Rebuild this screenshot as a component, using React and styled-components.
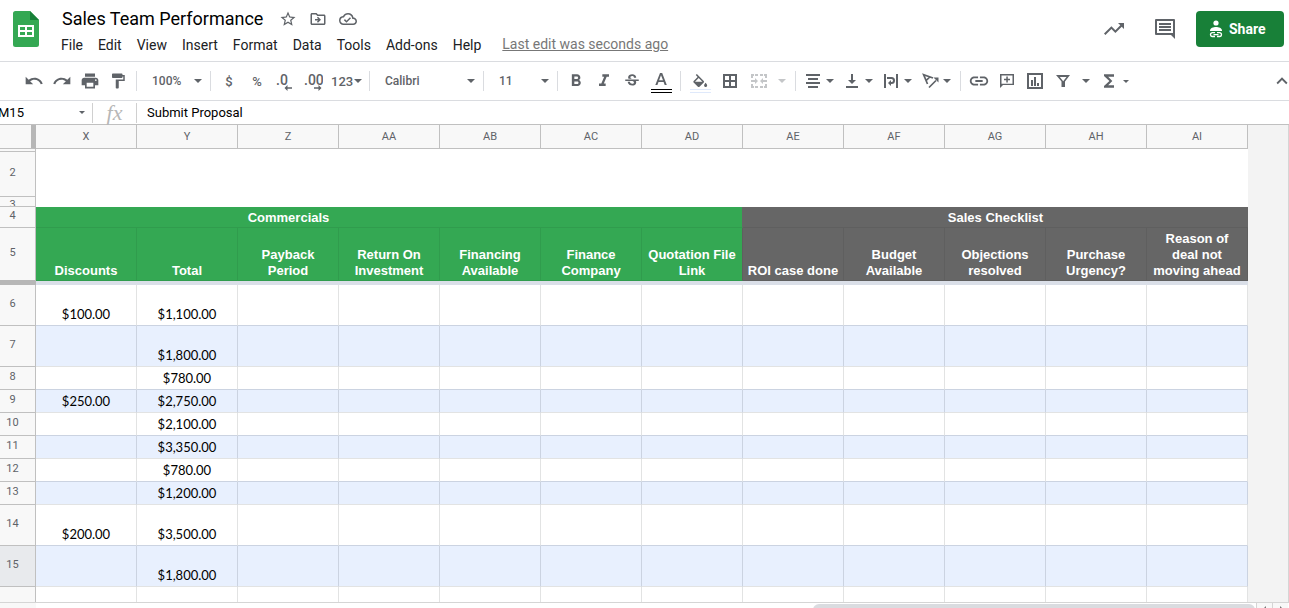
import styled, { createGlobalStyle } from 'styled-components'
import {
  MdUndo,
  MdRedo,
  MdPrint,
  MdFormatPaint,
  MdFormatBold,
  MdFormatItalic,
  MdStrikethroughS,
  MdLink,
  MdFunctions,
  MdStarBorder,
  MdOutlineDriveFileMove,
  MdOutlineCloudDone,
  MdTrendingUp,
  MdKeyboardArrowUp,
} from 'react-icons/md'

const GlobalStyle = createGlobalStyle`
* {
  box-sizing: border-box;
}
body {
  margin: 0;
  background: white;
  font-family: Roboto, "Liberation Sans", sans-serif;
}
button, input, select {
  font-family: inherit;
  margin: 0;
  padding: 0;
  border: none;
  outline: none;
  background: transparent;
}
svg {
  display: block;
  flex: none;
}
`

const Page = styled.div`
display: flex;
flex-direction: column;
height: 100vh;
overflow: hidden;
`

/* header */

const Header = styled.header`
display: flex;
align-items: flex-start;
height: 62px;
padding: 0 5px 0 13px;
border-bottom: 1px solid #dadce0;
`

const LogoLink = styled.a`
margin-top: 11px;
`

const TitleBlock = styled.div`
flex: 1;
margin-left: 15px;
`

const TitleRow = styled.div`
display: flex;
align-items: center;
height: 26px;
margin-top: 6px;
padding-left: 8px;
`

const Title = styled.h1`
margin: 0 10px 0 0;
font-size: 18px;
font-weight: 400;
line-height: 26px;
color: #000;
`

const TitleButton = styled.button`
display: flex;
justify-content: center;
width: 30px;
color: #5f6368;
`

const MenuRow = styled.nav`
display: flex;
align-items: center;
gap: 1px;
height: 26px;
`

const MenuButton = styled.button`
padding: 0 7px;
font-size: 14px;
line-height: 24px;
color: #202124;
`

const LastEdit = styled.a`
margin-left: 13px;
padding-bottom: 2px;
font-size: 14px;
line-height: 16px;
color: #777;
text-decoration: underline;
`

const HeaderActions = styled.div`
display: flex;
align-items: center;
height: 36px;
margin-top: 11px;
`

const HeaderButton = styled.button`
display: flex;
align-items: center;
justify-content: center;
width: 51px;
height: 36px;
color: #5f6368;
`

const ShareButton = styled.button`
display: flex;
align-items: center;
gap: 6px;
width: 88px;
height: 36px;
margin-left: 6px;
padding-left: 13px;
border-radius: 4px;
background: #188038;
color: white;
font-size: 14px;
font-weight: 700;
`

/* toolbar */

const Toolbar = styled.div`
display: flex;
align-items: center;
height: 39px;
padding-left: 20px;
border-bottom: 1px solid #dadce0;
color: #5f6368;
`

const Separator = styled.div`
width: 1px;
height: 20px;
margin: 0 4px;
background: #dadce0;
`

const ToolButton = styled.button`
display: flex;
align-items: center;
justify-content: ${props => props.$menu ? "flex-start" : "center"};
gap: ${props => props.$gap || 4}px;
width: ${props => props.$width || 28}px;
height: 28px;
padding-left: ${props => props.$menu ? "4px" : "0"};
color: ${props => props.$off ? "#c4c6c8" : "#5f6368"};
font-size: 13px;
font-weight: 500;
`

const PushRight = styled.div`
display: flex;
margin-left: auto;
width: 18px;
overflow: hidden;
`

const SelectBox = styled.div`
display: grid;
align-items: center;
width: ${props => props.$width}px;
height: 28px;
> * {
  grid-area: 1 / 1;
}
> svg {
  justify-self: end;
  margin-right: 4px;
  pointer-events: none;
}
`

const Select = styled.select`
appearance: none;
width: 100%;
height: 26px;
padding-left: 11px;
font-size: 12px;
font-weight: 500;
color: #5f6368;
`

/* formula bar */

const FormulaBar = styled.div`
display: flex;
align-items: center;
height: 24px;
border-bottom: 1px solid #c0c0c0;
`

const NameBox = styled.div`
display: flex;
align-items: center;
width: 92px;
overflow: hidden;
color: #5f6368;
`

const NameInput = styled.input`
width: 81px;
margin-left: -2px;
font-size: 13px;
color: #000;
`

const BarLine = styled.div`
width: 1px;
height: 20px;
background: #d0d0d0;
`

const Fx = styled.label`
width: 43px;
text-align: center;
font-family: "Liberation Serif", serif;
font-style: italic;
font-size: 22px;
line-height: 20px;
color: #b7b7b7;
`

const FormulaInput = styled.input`
flex: 1;
padding-left: 10px;
font-size: 13px;
color: #000;
`

/* sheet */

const SheetArea = styled.main`
flex: 1;
min-height: 0;
overflow: hidden;
margin-right: 1px;
background: #f3f3f3;
box-shadow: 1px 0 #d5d5d5;
`

const Sheet = styled.table`
table-layout: fixed;
width: 1248px;
border-collapse: separate;
border-spacing: 0;
background: white;
`

const Corner = styled.td`
padding: 0;
background: #f8f8f8;
border-right: 5px solid #b7b7b7;
border-bottom: 1px solid #c0c0c0;
`

const ColumnHead = styled.th`
height: 24px;
padding: 0;
border-right: 1px solid #c0c0c0;
border-bottom: 1px solid #c0c0c0;
background: #f8f8f8;
font-size: 11px;
font-weight: 400;
color: #5f6368;
`

const RowHead = styled.th`
padding: 0;
border-right: 1px solid #c0c0c0;
border-bottom: 1px solid ${props => props.$last ? "#b7b7b7" : "#c0c0c0"};
background: ${props => props.$active ? "#e8eaed" : "#f8f8f8"};
font-size: 11px;
font-weight: 400;
line-height: 16px;
color: #5f6368;
`

const RowNumber = styled.div`
display: flex;
align-items: safe center;
justify-content: center;
height: ${props => props.$height - 1}px;
padding: 0 10px 2px 0;
overflow: hidden;
`

const Blank = styled.td`
padding: 0;
`

const gridLine = gray => gray ? "#5f5f5f" : "#309c4d"

const GroupHead = styled.th`
padding: 1px 0 0;
border-right: ${props => props.$edge ? "1px solid #666666" : "none"};
border-bottom: 1px solid ${props => gridLine(props.$gray)};
background: ${props => props.$gray ? "#666666" : "#34a853"};
font-family: "Liberation Sans", sans-serif;
font-size: 13px;
line-height: 16px;
color: white;
`

const FieldHead = styled.th`
padding: 0 0 1px;
border-right: 1px solid ${props => gridLine(props.$gray || props.$edge)};
border-bottom: 1px solid ${props => gridLine(props.$gray)};
background: ${props => props.$gray ? "#666666" : "#34a853"};
font-family: "Liberation Sans", sans-serif;
font-size: 13px;
line-height: 16px;
vertical-align: bottom;
color: white;
`

const Freeze = styled.td`
height: 4px;
padding: 0;
background: ${props => props.$head ? "#b7b7b7" : "#dadfe8"};
`

const Cell = styled.td`
padding: 0 0 3px;
border-right: 1px solid ${props => props.$banded ? "#cbd3e1" : "#e2e3e3"};
border-bottom: 1px solid ${props => props.$beforeBand ? "#cbd3e1" : "#e2e3e3"};
background: ${props => props.$banded ? "#e8f0fe" : "white"};
font-family: Lato, sans-serif;
font-size: 13px;
line-height: 16px;
text-align: center;
vertical-align: bottom;
color: #000;
`

const ScrollBar = styled.div`
display: flex;
justify-content: flex-end;
height: 6px;
padding-right: 1px;
overflow: hidden;
border-top: 1px solid #d5d5d5;
background: linear-gradient(to right, #f8f8f8 36px, white 36px);
`

const Thumb = styled.div`
width: 442px;
height: 12px;
margin: 1px 1px 0 0;
border-radius: 6px;
background: #dadce0;
`

const ScrollButton = styled.button`
display: flex;
justify-content: center;
width: 16px;
height: 16px;
padding-top: 3px;
border-left: 1px solid #d5d5d5;
background: #f8f8f8;
color: #777;
`

/* drawings */

const Icon = ({ d, size = 18 }) => (
  <svg width={size} height={size} viewBox={`0 0 ${size} ${size}`} fill="currentColor" fillRule="evenodd">
    <path d={d} />
  </svg>
)

const Caret = ({ small }) => (
  <svg width={small ? 6 : 8} height={small ? 3 : 4} viewBox="0 0 8 4" fill="currentColor">
    <path d="M0 0h8L4 4z" />
  </svg>
)

const Logo = () => (
  <svg width="26" height="36" viewBox="0 0 26 36">
    <path fill="#34a853" d="M2.5 0H17l9 9v24.500a2.500 2.500 0 0 1-2.500 2.500h-21A2.500 2.500 0 0 1 0 33.500v-31A2.500 2.500 0 0 1 2.500 0z" />
    <path fill="#188038" d="M17 0l9 9h-9z" />
    <path fill="white" fillRule="evenodd" d="M5 14h16v12H5zM7 16v3h5v-3zM14 16v3h5v-3zM7 21v3h5v-3zM14 21v3h5v-3z" />
  </svg>
)

const ShareIcon = () => (
  <svg width="14" height="18" viewBox="0 0 14 18" fill="white">
    <circle cx="7" cy="3" r="2.600" />
    <path d="M1 11V10.500C1 8 4.500 7 7 7s6 1 6 3.500v.5z" />
    <path fill="none" stroke="white" strokeWidth="1.300" d="M6 12.700H3.400a1.900 1.900 0 0 0 0 3.800H6M8 12.700h2.600a1.900 1.900 0 0 1 0 3.800H8M4.500 14.600h5" />
  </svg>
)

const TextColorIcon = () => (
  <svg width="22" height="24" viewBox="0 0 22 24">
    <path fill="#5f6368" d="M10 4h2.200l4.600 12h-2.100l-1.100-3H8.500l-1.100 3H5.300zM11 6.300l-1.900 5h3.900z" />
    <path fill="#000" d="M1 20h21v1H1zM1 23h21v1H1z" />
  </svg>
)

const FillColorIcon = () => (
  <svg width="22" height="24" viewBox="0 0 22 24">
    <path
      fill="#5f6368"
      transform="translate(2 5) scale(.77)"
      d="M16.560 8.940L7.620 0 6.210 1.410l2.380 2.380-5.150 5.150c-.59.59-.59 1.540 0 2.120l5.500 5.500c.29.29.68.44 1.060.44s.77-.15 1.060-.44l5.500-5.500c.59-.58.59-1.530 0-2.120zM5.210 10L10 5.210 14.790 10H5.210zM19 11.500s-2 2.170-2 3.500c0 1.100.9 2 2 2s2-.9 2-2c0-1.330-2-3.500-2-3.500z"
    />
    <path fill="#dfe9fb" d="M1 20h21v1H1zM1 23h21v1H1z" />
  </svg>
)

const RotateIcon = () => (
  <svg width="18" height="18" viewBox="0 0 18 18" fill="none" stroke="currentColor" strokeWidth="1.700">
    <path d="M12 6L2.600 2.600 6.500 12M5 8.700L8.800 5M8 15.500l7-7" />
    <path fill="currentColor" stroke="none" d="M17.500 5.500v5l-5-5z" />
  </svg>
)

const DecimalIcon = ({ digits, more }) => (
  <svg width="20" height="22" viewBox="0 0 20 22" fill="#5f6368">
    <text x="1" y="15" fontSize="14" fontWeight="500" fontFamily="Roboto, sans-serif">{digits}</text>
    {more
      ? <path d="M11 17.300h4.500V15l3 3-3 3v-2.300H11z" />
      : <path d="M17 17.300h-4.500V15l-3 3 3 3v-2.300H17z" />}
  </svg>
)

const BORDERS = "M2 2h14v14H2zM4 4v4h4V4zM10 4v4h4V4zM4 10v4h4v-4zM10 10v4h4v-4z"
const MERGE = "M1 2h3v2H3v2H1zM5 2h3v2H5zM10 2h3v2h-3zM14 2h3v4h-2V4h-1zM1 12h2v2h1v2H1zM5 14h3v2H5zM10 14h3v2h-3zM15 12h2v4h-3v-2h1zM1 8h4V6l3 3-3 3v-2H1zM17 8h-4V6l-3 3 3 3v-2h4z"
const ALIGN = "M2 2h14v2H2zM4 6h10v2H4zM2 10h14v2H2zM4 14h10v2H4z"
const VALIGN = "M3 14h12v2H3zM8 2h2v6h3l-4 4-4-4h3z"
const WRAP = "M2 2h2v14H2zM14 2h2v14h-2zM5 5h4.500a3.500 3.500 0 0 1 0 7H9v2l-3-3 3-3v2h.5a1.500 1.500 0 0 0 0-3H5z"
const COMMENT_ADD = "M2 2h14v11H5l-3 3zM3.500 3.500v8.200h11V3.500zM8.300 4.500h1.500v2.300H12v1.500H9.800v2.300H8.300V8.300H6V6.800h2.300z"
const CHART = "M1 1h16v16H1zM3 3v12h12V3zM5 8h2v6H5zM8 5h2v9H8zM11 11h2v3h-2z"
const FILTER = "M2 3h14l-5 6.500V15H7.500V9.500zM5.800 5l3.400 4.300L12.500 5z"
const COMMENTS = "M2 1h18a1 1 0 0 1 1 1v19l-4-4H2a1 1 0 0 1-1-1V2a1 1 0 0 1 1-1zM3 3v12h16V3zM5 5h12v2H5zM5 8h12v2H5zM5 11h12v2H5z"

/* data */

const menus = ["File", "Edit", "View", "Insert", "Format", "Data", "Tools", "Add-ons", "Help"]

const columns = ["X", "Y", "Z", "AA", "AB", "AC", "AD", "AE", "AF", "AG", "AH", "AI"]

const fields = [
  ["Discounts"],
  ["Total"],
  ["Payback", "Period"],
  ["Return On", "Investment"],
  ["Financing", "Available"],
  ["Finance", "Company"],
  ["Quotation File", "Link"],
  ["ROI case done"],
  ["Budget", "Available"],
  ["Objections", "resolved"],
  ["Purchase", "Urgency?"],
  ["Reason of", "deal not", "moving ahead"],
]

const rows = [
  { number: 6, height: 41, discount: "$100.00", total: "$1,100.00" },
  { number: 7, height: 41, total: "$1,800.00" },
  { number: 8, height: 23, total: "$780.00" },
  { number: 9, height: 23, discount: "$250.00", total: "$2,750.00" },
  { number: 10, height: 23, total: "$2,100.00" },
  { number: 11, height: 23, total: "$3,350.00" },
  { number: 12, height: 23, total: "$780.00" },
  { number: 13, height: 23, total: "$1,200.00" },
  { number: 14, height: 41, discount: "$200.00", total: "$3,500.00" },
  { number: 15, height: 41, total: "$1,800.00" },
  { number: 16, height: 59 },
]

const RowHeader = ({ height, number, active, last }) => (
  <RowHead scope="row" $active={active} $last={last}>
    <RowNumber $height={height}>{number}</RowNumber>
  </RowHead>
)

const Dropdown = ({ label, value, width }) => (
  <SelectBox $width={width}>
    <Select aria-label={label} defaultValue={value}>
      <option>{value}</option>
    </Select>
    <Caret />
  </SelectBox>
)

const App = () => {
  return (
    <Page>
      <GlobalStyle />
      <Header>
        <LogoLink href="#home" aria-label="Sheets home"><Logo /></LogoLink>
        <TitleBlock>
          <TitleRow>
            <Title>Sales Team Performance</Title>
            <TitleButton aria-label="Star"><MdStarBorder size={18} /></TitleButton>
            <TitleButton aria-label="Move"><MdOutlineDriveFileMove size={18} /></TitleButton>
            <TitleButton aria-label="Document status"><MdOutlineCloudDone size={18} /></TitleButton>
          </TitleRow>
          <MenuRow>
            {menus.map(menu => <MenuButton key={menu}>{menu}</MenuButton>)}
            <LastEdit href="#history">Last edit was seconds ago</LastEdit>
          </MenuRow>
        </TitleBlock>
        <HeaderActions>
          <HeaderButton aria-label="Activity"><MdTrendingUp size={24} /></HeaderButton>
          <HeaderButton aria-label="Comments"><Icon size={22} d={COMMENTS} /></HeaderButton>
          <ShareButton><ShareIcon />Share</ShareButton>
        </HeaderActions>
      </Header>

      <Toolbar>
        <ToolButton aria-label="Undo"><MdUndo size={20} /></ToolButton>
        <ToolButton aria-label="Redo"><MdRedo size={20} /></ToolButton>
        <ToolButton aria-label="Print"><MdPrint size={20} /></ToolButton>
        <ToolButton aria-label="Paint format"><MdFormatPaint size={18} /></ToolButton>
        <Separator />
        <Dropdown label="Zoom" value="100%" width={65} />
        <Separator />
        <ToolButton>$</ToolButton>
        <ToolButton>%</ToolButton>
        <ToolButton aria-label="Decrease decimal places"><DecimalIcon digits=".0" /></ToolButton>
        <ToolButton aria-label="Increase decimal places"><DecimalIcon digits=".00" more /></ToolButton>
        <ToolButton $width={38} $gap={1} $menu>123<Caret /></ToolButton>
        <Separator />
        <Dropdown label="Font" value="Calibri" width={105} />
        <Separator />
        <Dropdown label="Font size" value="11" width={65} />
        <Separator />
        <ToolButton aria-label="Bold"><MdFormatBold size={20} /></ToolButton>
        <ToolButton aria-label="Italic"><MdFormatItalic size={20} /></ToolButton>
        <ToolButton aria-label="Strikethrough"><MdStrikethroughS size={18} /></ToolButton>
        <ToolButton aria-label="Text color" $width={30}><TextColorIcon /></ToolButton>
        <Separator />
        <ToolButton aria-label="Fill color" $width={30}><FillColorIcon /></ToolButton>
        <ToolButton aria-label="Borders" $width={30}><Icon d={BORDERS} /></ToolButton>
        <ToolButton aria-label="Merge cells" $width={46} $gap={10} $off><Icon d={MERGE} /><Caret /></ToolButton>
        <Separator />
        <ToolButton aria-label="Horizontal align" $width={39} $menu><Icon d={ALIGN} /><Caret /></ToolButton>
        <ToolButton aria-label="Vertical align" $width={39} $menu><Icon d={VALIGN} /><Caret /></ToolButton>
        <ToolButton aria-label="Text wrapping" $width={39} $menu><Icon d={WRAP} /><Caret /></ToolButton>
        <ToolButton aria-label="Text rotation" $width={39} $menu><RotateIcon /><Caret /></ToolButton>
        <Separator />
        <ToolButton aria-label="Insert link"><MdLink size={22} /></ToolButton>
        <ToolButton aria-label="Insert comment"><Icon d={COMMENT_ADD} /></ToolButton>
        <ToolButton aria-label="Insert chart"><Icon d={CHART} /></ToolButton>
        <ToolButton aria-label="Filter" $width={46} $gap={10}><Icon d={FILTER} /><Caret /></ToolButton>
        <ToolButton aria-label="Functions" $width={38} $menu><MdFunctions size={20} /><Caret small /></ToolButton>
        <PushRight>
          <ToolButton aria-label="Hide menus"><MdKeyboardArrowUp size={22} /></ToolButton>
        </PushRight>
      </Toolbar>

      <FormulaBar>
        <NameBox>
          <NameInput aria-label="Name box" defaultValue="M15" />
          <Caret small />
        </NameBox>
        <BarLine />
        <Fx htmlFor="formula">fx</Fx>
        <BarLine />
        <FormulaInput id="formula" defaultValue="Submit Proposal" />
      </FormulaBar>

      <SheetArea>
        <Sheet>
          <colgroup>
            <col style={{ width: 36 }} />
            {columns.map(column => <col key={column} />)}
          </colgroup>
          <thead>
            <tr>
              <Corner />
              {columns.map(column => <ColumnHead key={column} scope="col">{column}</ColumnHead>)}
            </tr>
          </thead>
          <tbody>
            <tr>
              <RowHeader height={3} />
              <Blank colSpan={12} />
            </tr>
            <tr>
              <RowHeader height={45} number={2} />
              <Blank colSpan={12} />
            </tr>
            <tr>
              <RowHeader height={10} number={3} />
              <Blank colSpan={12} />
            </tr>
            <tr>
              <RowHeader height={21} number={4} />
              {/* the merged title starts left of the visible columns */}
              <GroupHead colSpan={5}>Commercials</GroupHead>
              <GroupHead colSpan={2} $edge />
              <GroupHead colSpan={5} $gray>Sales Checklist</GroupHead>
            </tr>
            <tr>
              <RowHeader height={53} number={5} last />
              {fields.map((lines, i) => (
                <FieldHead key={columns[i]} $gray={i > 6} $edge={i === 6}>
                  {lines.map(line => <div key={line}>{line}</div>)}
                </FieldHead>
              ))}
            </tr>
            <tr>
              <Freeze $head />
              <Freeze colSpan={12} />
            </tr>
            {rows.map(row => {
              const banded = row.number % 2 === 1
              return (
                <tr key={row.number}>
                  <RowHeader height={row.height} number={row.number} active={row.number === 15} />
                  {columns.map((column, i) => (
                    <Cell key={column} $banded={banded} $beforeBand={!banded}>
                      {i === 0 && row.discount}
                      {i === 1 && row.total}
                    </Cell>
                  ))}
                </tr>
              )
            })}
          </tbody>
        </Sheet>
      </SheetArea>

      <ScrollBar>
        <Thumb />
        <ScrollButton aria-label="Scroll left"><Icon size={6} d="M4 0v6L1 3z" /></ScrollButton>
        <ScrollButton aria-label="Scroll right"><Icon size={6} d="M2 0v6l3-3z" /></ScrollButton>
      </ScrollBar>
    </Page>
  );
};

export default App;
